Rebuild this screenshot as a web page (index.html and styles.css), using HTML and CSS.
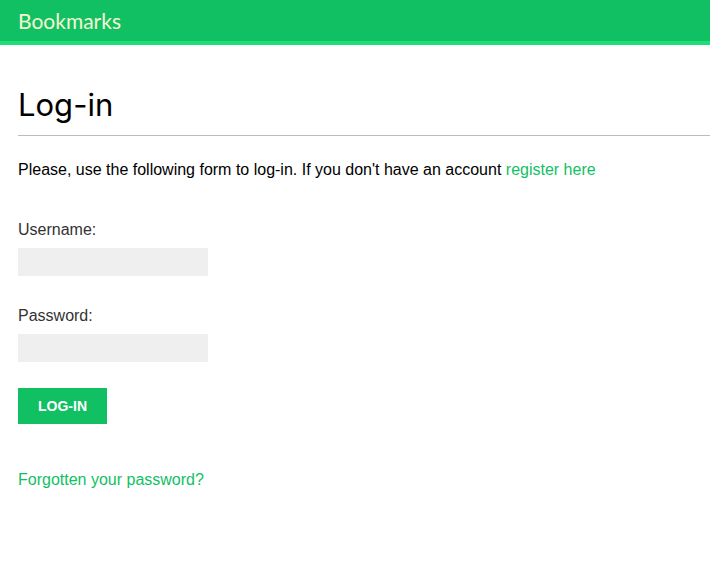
FILE: index.html
```html
<!DOCTYPE html>
<html lang="en">
<head>
<meta charset="utf-8">
<title>Log-in</title>
<link rel="stylesheet" href="styles.css">
</head>
<body>
<header class="site-header">
  <span class="logo">Bookmarks</span>
</header>
<main class="content">
  <h1 class="page-title">Log-in</h1>
  <p class="intro">Please, use the following form to log-in. If you don't have an account <a href="#" class="link">register here</a></p>
  <form class="login-form">
    <div class="field">
      <label class="field-label" for="id_username">Username:</label>
      <input class="field-input" type="text" id="id_username">
    </div>
    <div class="field">
      <label class="field-label" for="id_password">Password:</label>
      <input class="field-input" type="password" id="id_password">
    </div>
    <button type="button" class="btn-submit">Log-in</button>
  </form>
  <p class="forgot"><a href="#" class="link">Forgotten your password?</a></p>
</main>
</body>
</html>
```
FILE: styles.css
```css
html, body {
  margin: 0;
  padding: 0;
  background: #fff;
}
body {
  font-family: "Liberation Sans", Arial, sans-serif;
  font-size: 16px;
  line-height: 20px;
  color: #333;
}
.site-header {
  height: 41px;
  background: #12c064;
  border-bottom: 4px solid #1cdf78;
  padding: 0 18px;
  display: flex;
  align-items: center;
}
.logo {
  font-family: Lato, "Noto Sans", sans-serif;
  font-size: 21px;
  line-height: 24px;
  color: #f4f6d2;
}
.content {
  padding: 40px 0 0 18px;
}
.page-title {
  margin: 0;
  font-family: Inter, Lato, sans-serif;
  font-weight: normal;
  font-size: 31px;
  line-height: 40px;
  color: #000;
  padding-bottom: 10px;
  border-bottom: 1px solid #bbb;
}
.intro {
  margin: 24px 0 0;
  color: #000;
}
.link {
  color: #12c064;
  text-decoration: none;
}
.login-form {
  margin-top: 40px;
  display: flex;
  flex-direction: column;
  align-items: flex-start;
}
.field {
  display: flex;
  flex-direction: column;
  align-items: flex-start;
  margin-bottom: 30px;
}
.field + .field {
  margin-bottom: 26px;
}
.field-label {
  display: block;
  margin-bottom: 8px;
}
.field-input {
  box-sizing: border-box;
  width: 190px;
  height: 28px;
  border: none;
  background: #efefef;
  margin: 0;
  padding: 0 8px;
  font: inherit;
}
.btn-submit {
  box-sizing: border-box;
  width: 89px;
  height: 36px;
  border: none;
  background: #12c064;
  color: #fff;
  font-family: "Liberation Sans", Arial, sans-serif;
  font-weight: bold;
  font-size: 14px;
  text-transform: uppercase;
  padding: 0;
  margin: 0;
  cursor: pointer;
}
.forgot {
  margin: 46px 0 0;
}
```
